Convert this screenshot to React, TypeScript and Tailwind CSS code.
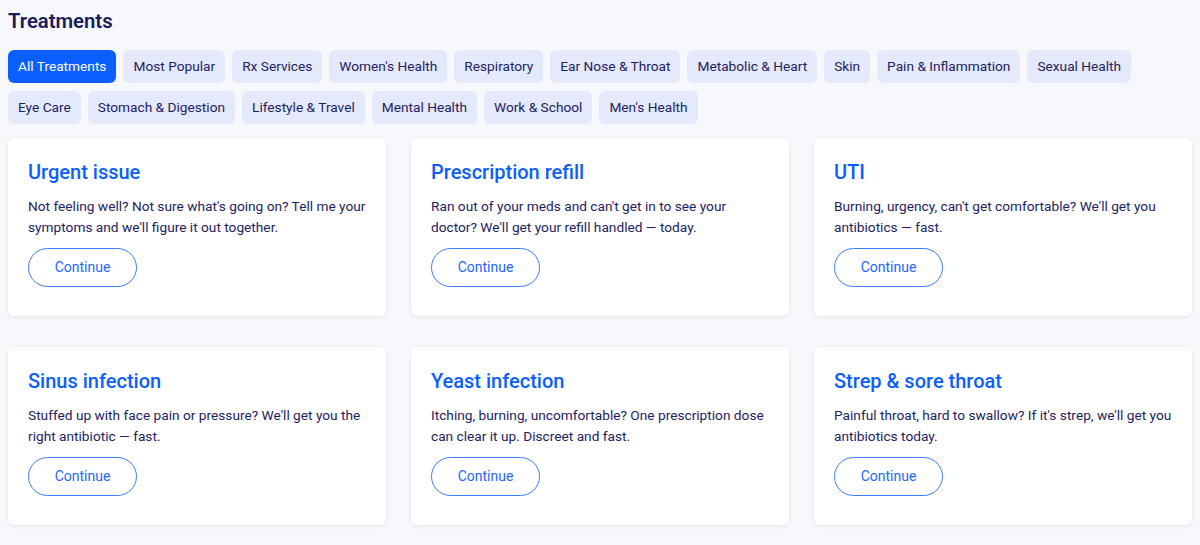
const categories = [
  "All Treatments",
  "Most Popular",
  "Rx Services",
  "Women's Health",
  "Respiratory",
  "Ear Nose & Throat",
  "Metabolic & Heart",
  "Skin",
  "Pain & Inflammation",
  "Sexual Health",
  "Eye Care",
  "Stomach & Digestion",
  "Lifestyle & Travel",
  "Mental Health",
  "Work & School",
  "Men's Health",
];

const treatments = [
  {
    title: "Urgent issue",
    body: "Not feeling well? Not sure what's going on? Tell me your symptoms and we'll figure it out together.",
  },
  {
    title: "Prescription refill",
    body: "Ran out of your meds and can't get in to see your doctor? We'll get your refill handled — today.",
  },
  {
    title: "UTI",
    body: "Burning, urgency, can't get comfortable? We'll get you antibiotics — fast.",
  },
  {
    title: "Sinus infection",
    body: "Stuffed up with face pain or pressure? We'll get you the right antibiotic — fast.",
  },
  {
    title: "Yeast infection",
    body: "Itching, burning, uncomfortable? One prescription dose can clear it up. Discreet and fast.",
  },
  {
    title: "Strep & sore throat",
    body: "Painful throat, hard to swallow? If it's strep, we'll get you antibiotics today.",
  },
];

export default function App() {
  return (
    <div
      className="min-h-screen bg-[#f7f8fb] px-2 pt-[7px] pb-5"
      style={{ fontFamily: "Roboto, 'Liberation Sans', sans-serif" }}
    >
      <h2 className="text-[20.3px] leading-[28px] font-semibold text-[#181c5a]">
        Treatments
      </h2>

      {/* Category filters */}
      <div className="mt-[15px] flex flex-wrap gap-x-[7px] gap-y-2">
        {categories.map((c, i) => (
          <button
            key={c}
            className={
              i === 0
                ? "h-[33px] px-[10px] rounded-[6px] bg-[#0b5ffe] text-white text-[13.7px]"
                : "h-[33px] px-[10px] rounded-[6px] bg-[#e4e9fb] text-[#1e2260] text-[13.7px]"
            }
          >
            {c}
          </button>
        ))}
      </div>

      {/* Treatment cards */}
      <div className="mt-[14px] grid grid-cols-3 gap-x-[25px] gap-y-[31px]">
        {treatments.map((t) => (
          <div
            key={t.title}
            className="h-[178px] rounded-[6px] bg-white px-5 pt-[21px] shadow-[0_1px_4px_rgba(20,30,80,0.08)]"
          >
            <h3 className="text-[20px] leading-[26px] font-medium text-[#0b5ffe]">{t.title}</h3>
            <p className="mt-[11px] text-[13.7px] leading-[21px] text-[#1e2260]">{t.body}</p>
            <button className="mt-[10px] h-[39px] w-[109px] rounded-full border border-[#3d7bfe] text-[14px] text-[#1f66fe]">
              Continue
            </button>
          </div>
        ))}
      </div>
    </div>
  );
}
